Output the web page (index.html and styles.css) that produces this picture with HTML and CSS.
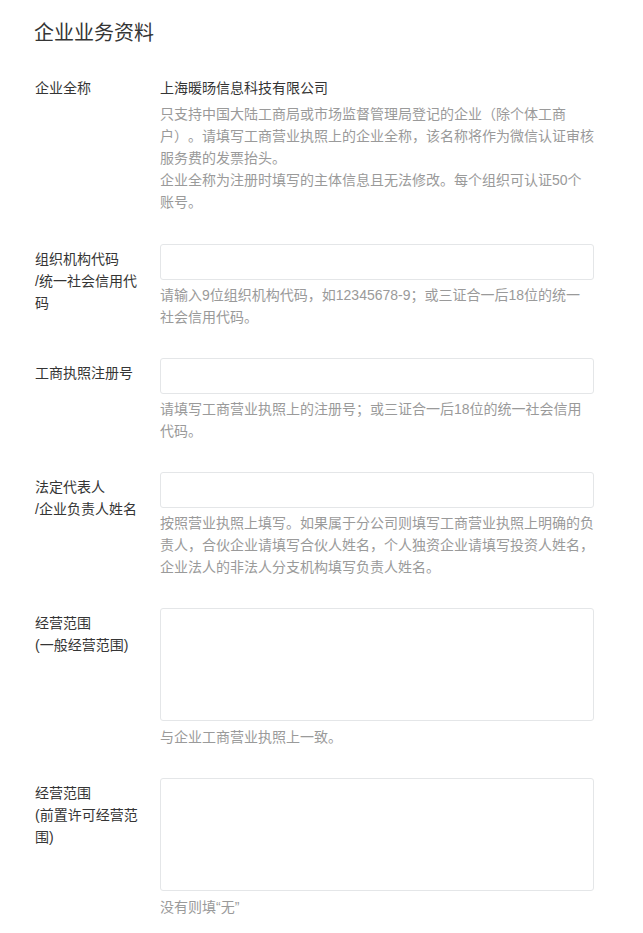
FILE: index.html
```html
<!DOCTYPE html>
<html lang="zh-CN">
<head>
<meta charset="utf-8">
<title>企业业务资料</title>
<link rel="stylesheet" href="styles.css">
</head>
<body>
<div class="page">
  <h2 class="title">企业业务资料</h2>

  <div class="row">
    <div class="label">企业全称</div>
    <div class="field">
      <div class="value">上海暖旸信息科技有限公司</div>
      <p class="hint">只支持中国大陆工商局或市场监督管理局登记的企业（除个体工商户）。请填写工商营业执照上的企业全称，该名称将作为微信认证审核服务费的发票抬头。<br>企业全称为注册时填写的主体信息且无法修改。每个组织可认证50个账号。</p>
    </div>
  </div>

  <div class="row">
    <div class="label">组织机构代码<br>/统一社会信用代码</div>
    <div class="field">
      <input class="input" type="text">
      <p class="hint">请输入9位组织机构代码，如12345678-9；或三证合一后18位的统一社会信用代码。</p>
    </div>
  </div>

  <div class="row">
    <div class="label">工商执照注册号</div>
    <div class="field">
      <input class="input" type="text">
      <p class="hint">请填写工商营业执照上的注册号；或三证合一后18位的统一社会信用代码。</p>
    </div>
  </div>

  <div class="row">
    <div class="label">法定代表人<br>/企业负责人姓名</div>
    <div class="field">
      <input class="input" type="text">
      <p class="hint">按照营业执照上填写。如果属于分公司则填写工商营业执照上明确的负责人，合伙企业请填写合伙人姓名，个人独资企业请填写投资人姓名，企业法人的非法人分支机构填写负责人姓名。</p>
    </div>
  </div>

  <div class="row">
    <div class="label">经营范围<br>(一般经营范围)</div>
    <div class="field">
      <textarea class="textarea"></textarea>
      <p class="hint hint-ta">与企业工商营业执照上一致。</p>
    </div>
  </div>

  <div class="row">
    <div class="label">经营范围<br>(前置许可经营范围)</div>
    <div class="field">
      <textarea class="textarea"></textarea>
      <p class="hint hint-ta">没有则填“无”</p>
    </div>
  </div>
</div>
</body>
</html>
```

FILE: styles.css
```css
html, body {
  margin: 0;
  padding: 0;
  background: #ffffff;
}

body {
  font-family: "Liberation Sans", "Noto Sans CJK SC", sans-serif;
  color: #353535;
  font-size: 14px;
  text-spacing-trim: space-all;
}

.page {
  padding: 19px 49px 20px 35px;
}

.title {
  margin: 0 0 26px -1px;
  font-size: 20px;
  line-height: 28px;
  font-weight: normal;
  color: #353535;
}

.row {
  display: grid;
  grid-template-columns: 125px 1fr;
  margin-bottom: 30px;
}

.label {
  padding: 4px 18px 0 0;
  font-size: 14px;
  line-height: 22px;
  color: #353535;
}

.field {
  min-width: 0;
}

.value {
  padding-top: 4px;
  font-size: 14px;
  line-height: 22px;
  color: #353535;
}

.hint {
  margin: 4px 0 0;
  font-size: 14px;
  line-height: 22px;
  color: #9a9a9a;
}

.value + .hint {
  margin-top: 4px;
  margin-bottom: 1px;
}

.hint-ta {
  margin-top: 5px;
}

.input,
.textarea {
  display: block;
  box-sizing: border-box;
  width: 100%;
  margin: 0;
  border: 1px solid #e4e6e8;
  border-radius: 3px;
  background: #fff;
  font-family: inherit;
  font-size: 14px;
  outline: none;
}

.input {
  height: 36px;
  padding: 0 10px;
}

.textarea {
  height: 113px;
  padding: 8px 10px;
  resize: none;
}
```
